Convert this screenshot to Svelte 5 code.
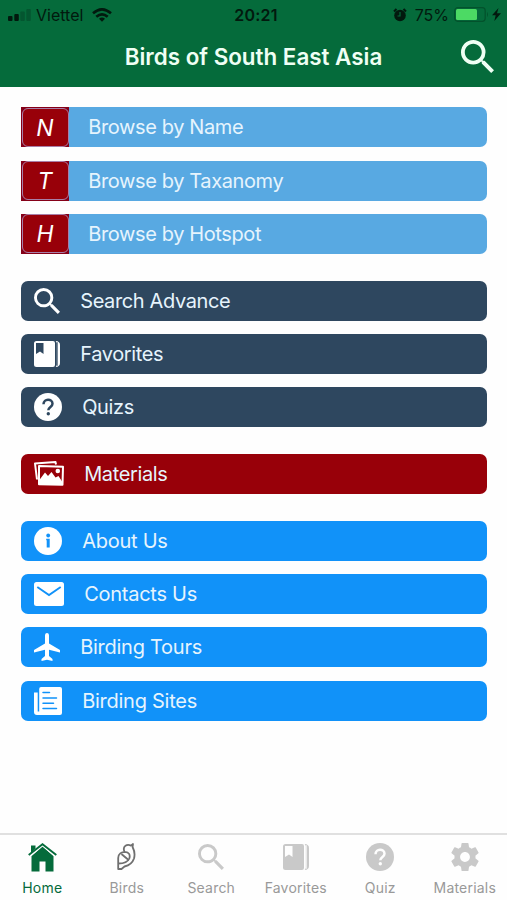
<script lang="ts">
    type Icon = { box: string; w: number; h: number; body: string };

    const search = '<path d="M15.5 14h-.79l-.28-.27A6.471 6.471 0 0 0 16 9.5 6.5 6.5 0 1 0 9.5 16c1.61 0 3.09-.59 4.23-1.57l.27.28v.79l5 4.99L20.49 19l-4.99-5zm-6 0C7.01 14 5 11.99 5 9.5S7.01 5 9.5 5 14 7.01 14 9.5 11.99 14 9.5 14z"/>';
    const book = '<path fill-rule="evenodd" d="M2.5 0H19Q21 0 21 2V24Q21 26 19 26H2.5Q0 26 0 23.500V2.500Q0 0 2.500 0ZM2 2V13L6 10.500L9.500 13V2Z"/><path d="M21.700 0Q26 .3 26 4V22Q26 25.700 21.700 26L22.800 24V2Z"/><path d="M23.300 1.200V24.800" fill="none" stroke="var(--cut)" stroke-width=".8"/>';
    const help = '<circle cx="14" cy="14" r="14"/><path d="M9.500 11.200C9.500 5.200 18.500 5.200 18.500 10.700C18.500 14 14.300 13.800 14.300 17.300" fill="none" stroke="var(--cut)" stroke-width="2.500"/><circle cx="14.300" cy="20.800" r="1.700" fill="var(--cut)"/>';

    const icons: Record<string, Icon> = {
        search: { box: '3 3 17.5 17.5', w: 26, h: 26, body: search },
        book: { box: '0 0 26 26', w: 26, h: 26, body: book },
        help: { box: '0 0 28 28', w: 28, h: 28, body: help },
        images: {
            box: '0 0 30 25', w: 30, h: 25,
            body: '<path d="M3 18.500L1 2.500L21.500 1L22 3.500" fill="none" stroke="currentColor" stroke-width="2" stroke-linejoin="round"/><path d="M5 5L29 5.700L28.500 23.800L5 23.200Z" fill="none" stroke="currentColor" stroke-width="2" stroke-linejoin="round"/><path d="M5 23V19.500L11 11.500L14 15L17.500 11L21.500 16.500L24.500 15L28 20.500V23.500Z"/><circle cx="23.800" cy="10" r="2.300"/>'
        },
        info: {
            box: '0 0 28 28', w: 28, h: 28,
            body: '<circle cx="14" cy="14" r="14"/><circle cx="14.200" cy="8.500" r="1.900" fill="var(--cut)"/><path d="M12.200 11.700H15.700V20.500H12.700V13.200H12.200Z" fill="var(--cut)"/>'
        },
        mail: {
            box: '0 0 30 24', w: 30, h: 24,
            body: '<rect width="30" height="24" rx="2.500"/><path d="M3.300 5L15 13L26.700 5" fill="none" stroke="var(--cut)" stroke-width="1.900"/>'
        },
        plane: {
            box: '0 0 26 28', w: 26, h: 28,
            body: '<path d="M11 2.500C11 -.8 15 -.8 15 2.500V10.500L26 17V19.500L15 16.800V23L18.500 26V28L13 26.800L7.500 28V26L11 23V16.800L0 19.500V17L11 10.500Z"/>'
        },
        news: {
            box: '0 0 28 28', w: 28, h: 28,
            body: '<path d="M7 0H26Q28 0 28 2V26Q28 28 26 28H3Q0 28 0 25V5.500H3.700V24.500H5.200V2Q5.200 0 7 0Z"/><path d="M9 5.500H15.500M9 11H22.500M9 16.200H19.500M9 21.500H22.500" fill="none" stroke="var(--cut)" stroke-width="1.500" stroke-linecap="round"/>'
        },
        home: {
            box: '0 0 29 29', w: 29, h: 29,
            body: '<path d="M3.500 13L14.500 3.500L25.500 13V28.500H17.500V18.500H11.500V28.500H3.500Z"/><path d="M3 2.500H7.500V6L3 10Z"/><path d="M.7 13.400L14.500 1.700L28.300 13.400" fill="none" stroke="var(--cut)" stroke-width="2.700"/><path d="M.7 12L14.500 1.200L28.300 12" fill="none" stroke="currentColor" stroke-width="1.900"/>'
        },
        bird: {
            box: '0 0 19 28', w: 19, h: 28,
            body: '<g fill="none" stroke="currentColor" stroke-width="1.800" stroke-linejoin="round" stroke-linecap="round"><path d="M7.200 8C5.500 3 10 .8 14 2.600L16 1L15.600 4C17.600 8 18 12 17 15.500C15.500 20 12 22.500 7.500 23.500L4.500 26H1.200V15C1.200 11 4.500 9 8 8.800C12 9 13.500 12 12.300 15.500C10.500 19.500 5.500 20.500 1.500 20.500"/><path d="M5 11.500L11.300 16.800"/></g>'
        },
        gear: {
            box: '2.27 2 19.46 20', w: 28, h: 28,
            body: '<path d="M19.430 12.980c.04-.32.07-.64.07-.98s-.03-.66-.07-.98l2.110-1.650c.19-.15.24-.42.12-.64l-2-3.460c-.12-.22-.39-.3-.61-.22l-2.490 1c-.52-.4-1.080-.73-1.690-.98l-.38-2.650A.488.488 0 0 0 14 2h-4c-.25 0-.46.18-.49.42l-.38 2.650c-.61.25-1.170.59-1.690.98l-2.490-1c-.23-.09-.49 0-.61.22l-2 3.460c-.13.22-.07.49.12.64l2.110 1.650c-.04.32-.07.65-.07.98s.03.66.07.98l-2.110 1.650c-.19.15-.24.42-.12.64l2 3.460c.12.22.39.3.61.22l2.490-1c.52.4 1.080.73 1.690.98l.38 2.650c.03.24.24.42.49.42h4c.25 0 .46-.18.49-.42l.38-2.650c.61-.25 1.170-.59 1.690-.98l2.490 1c.23.09.49 0 .61-.22l2-3.460c.12-.22.07-.49-.12-.64l-2.110-1.650zM12 15.500c-1.930 0-3.500-1.570-3.500-3.500s1.570-3.500 3.500-3.500 3.500 1.570 3.500 3.500-1.570 3.500-3.500 3.500z"/>'
        }
    };

    const browse = [
        { letter: 'N', label: 'Browse by Name' },
        { letter: 'T', label: 'Browse by Taxanomy' },
        { letter: 'H', label: 'Browse by Hotspot' }
    ];

    const groups = [
        {
            color: 'navy',
            rows: [
                { icon: 'search', label: 'Search Advance' },
                { icon: 'book', label: 'Favorites' },
                { icon: 'help', label: 'Quizs' }
            ]
        },
        { color: 'red', rows: [{ icon: 'images', label: 'Materials' }] },
        {
            color: 'blue',
            rows: [
                { icon: 'info', label: 'About Us' },
                { icon: 'mail', label: 'Contacts Us' },
                { icon: 'plane', label: 'Birding Tours' },
                { icon: 'news', label: 'Birding Sites' }
            ]
        }
    ];

    const tabs = [
        { icon: 'home', label: 'Home' },
        { icon: 'bird', label: 'Birds' },
        { icon: 'search', label: 'Search' },
        { icon: 'book', label: 'Favorites' },
        { icon: 'help', label: 'Quiz' },
        { icon: 'gear', label: 'Materials' }
    ];

    let active = $state('Home');
</script>

{#snippet glyph(name: string)}
    {@const icon = icons[name]}
    <svg viewBox={icon.box} width={icon.w} height={icon.h} fill="currentColor" aria-hidden="true">
        {@html icon.body}
    </svg>
{/snippet}

<div class="screen">
    <header>
        <div class="status">
            <div class="carrier">
                <svg class="signal" viewBox="0 0 24 12" width="24" height="12">
                    <rect y="7" width="4.500" height="5" rx="1" />
                    <rect x="6.300" y="5" width="4.500" height="7" rx="1" />
                    <rect x="12.300" y="2.500" width="4.500" height="9.500" rx="1" opacity=".25" />
                    <rect x="18.300" width="4.500" height="12" rx="1" opacity=".25" />
                </svg>
                <span>Viettel</span>
                <svg class="wifi" viewBox="0 0 20 14" width="20" height="14" fill="none" stroke="currentColor" stroke-width="2.600">
                    <path d="M1 5.300Q10 -2.600 19 5.300M4.300 8.800Q10 3.800 15.700 8.800" />
                    <path d="M7 10.700Q10 8.300 13 10.700L10 13.700Z" fill="currentColor" stroke="none" />
                </svg>
            </div>
            <time>20:21</time>
            <div class="power">
                <svg viewBox="0 0 14 14" width="14" height="14">
                    <circle cx="7" cy="7.500" r="5.800" />
                    <path d="M1 3.500L3.500 1M13 3.500L10.500 1" stroke="currentColor" stroke-width="2" />
                    <path d="M7 4V8H4.500" fill="none" stroke="#056b3b" stroke-width="1.200" />
                </svg>
                <span>75%</span>
                <svg viewBox="0 0 36 15" width="36" height="15">
                    <rect x=".7" y=".7" width="30.500" height="13.600" rx="3" fill="none" stroke="#03522c" stroke-width="1.200" />
                    <rect x="2" y="2" width="21" height="11" rx="1.500" fill="#4cda64" />
                    <path d="M33 5Q35 7.500 33 10Z" fill="#03522c" />
                </svg>
                <svg class="bolt" viewBox="0 0 9 13" width="9" height="13"><path d="M6.500 0L0 7.300H3.700L2.300 13L9 5.300H5Z" /></svg>
            </div>
        </div>
        <div class="title">
            <h1>Birds of South East Asia</h1>
            <button class="find" aria-label="Search">
                <svg viewBox="3 3 17.500 17.500" width="33" height="33" fill="currentColor">{@html search}</svg>
            </button>
        </div>
    </header>

    <main>
        <section>
            {#each browse as row}
                <button class="row sky">
                    <span class="badge"><i>{row.letter}</i></span>
                    <span class="label">{row.label}</span>
                </button>
            {/each}
        </section>
        {#each groups as group}
            <section>
                {#each group.rows as row}
                    <button class="row {group.color}">
                        {@render glyph(row.icon)}
                        <span class="label">{row.label}</span>
                    </button>
                {/each}
            </section>
        {/each}
    </main>

    <nav>
        {#each tabs as tab}
            <button class="tab {tab.icon}" class:active={active === tab.label} onclick={() => (active = tab.label)}>
                <span class="pic">{@render glyph(tab.icon)}</span>
                <span class="name">{tab.label}</span>
            </button>
        {/each}
    </nav>
</div>

<style>
    :global(body) { background: #fefefe; }

    .screen {
        display: flex;
        flex-direction: column;
        height: 900px;
        overflow: hidden;
        font-family: Inter, "Liberation Sans", sans-serif;
    }

    button {
        border: none;
        padding: 0;
        background: none;
        font: inherit;
        cursor: pointer;
    }
    svg { display: block; flex-shrink: 0; }

    header {
        height: 86.5px;
        flex-shrink: 0;
        background: #056b3b;
    }
    .status {
        display: grid;
        grid-template-columns: 1fr auto 1fr;
        align-items: center;
        height: 29px;
        padding: 0 6px 0 8px;
        font-size: 16px;
        color: #02190e;
        fill: #02190e;
    }
    .carrier, .power { display: flex; align-items: center; }
    .carrier span { margin: 0 9px 0 4px; }
    .carrier .wifi { fill: none; }
    .status time { margin-left: 3px; font-weight: 600; letter-spacing: 0.2px; }
    .power { justify-content: flex-end; }
    .power span { margin: 0 5px 0 8px; }
    .bolt { margin-left: 2px; }

    .title {
        display: grid;
        grid-template-columns: 1fr auto 1fr;
        align-items: center;
        height: 54px;
    }
    h1 {
        grid-column: 2;
        margin: 0;
        padding-top: 1px;
        text-align: center;
        font-size: 22.4px;
        font-weight: 600;
        color: #effff4;
        white-space: nowrap;
    }
    .find {
        justify-self: end;
        margin-right: 13px;
        color: #effff4;
    }

    main {
        flex: 1;
        display: flex;
        flex-direction: column;
        gap: 26.67px;
        padding: 20.8px 20px 0 21px;
    }
    section {
        display: flex;
        flex-direction: column;
        gap: 13.33px;
    }
    .row {
        display: flex;
        align-items: center;
        gap: 20.2px;
        height: 40px;
        padding-left: 13px;
        border-radius: 7px;
        color: #fff;
        background: var(--cut);
        text-align: left;
    }
    .label {
        font-size: 20px;
        letter-spacing: -0.38px;
        color: #e6f4fd;
        line-height: 40px;
    }
    .sky { --cut: #58a9e2; padding-left: 0; gap: 19.2px; }
    .navy { --cut: #2e475f; }
    .red { --cut: #980009; }
    .blue { --cut: #1192f9; }
    .blue .label { letter-spacing: -0.26px; }

    .badge {
        display: flex;
        width: 48px;
        height: 40px;
        background: #850018;
    }
    .badge i {
        flex: 1;
        margin: 0.5px;
        border: 1px solid #a87fa8;
        border-radius: 6px;
        background: #980009;
        text-align: center;
        font-size: 23px;
        line-height: 38px;
    }

    nav {
        --cut: #fefefe;
        display: grid;
        grid-template-columns: repeat(6, 1fr);
        height: 67px;
        border-top: 2px solid #e0e0e0;
        flex-shrink: 0;
        box-sizing: border-box;
    }
    .tab {
        display: flex;
        flex-direction: column;
        align-items: center;
        padding-top: 7px;
        color: #c9c9c9;
    }
    .pic { display: flex; align-items: center; height: 30px; }
    .name {
        margin-top: 7px;
        font-size: 14px;
        line-height: 18px;
        letter-spacing: 0.2px;
        color: #999;
    }
    .bird { color: #6f6f6f; }
    .active, .active .name { color: #056b3b; }
</style>
